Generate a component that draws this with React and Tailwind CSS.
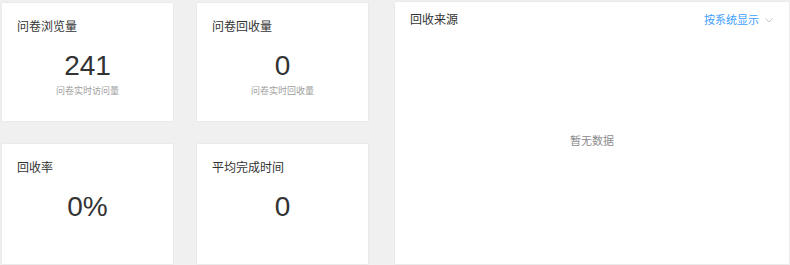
import React from "react";

const font = { fontFamily: '"Liberation Sans", "Noto Sans CJK SC", sans-serif' };

const StatCard = ({ title, value, sub }) => (
  <div className="bg-white shadow-[0_0_2px_rgba(0,0,0,0.08)] px-[15px] pt-[15px]">
    <div className="text-[12px] leading-[18px] text-[#333]">{title}</div>
    <div className="mt-[16px] text-center text-[28px] leading-[28px] text-[#333]">{value}</div>
    {sub && (
      <div className="mt-[5px] text-center text-[9px] leading-[12px] text-[#a0a0a0]">{sub}</div>
    )}
  </div>
);

export default function App() {
  return (
    <div className="w-[790px] h-[265px] bg-[#f0f0f0] flex overflow-hidden" style={font}>
      <div className="pl-[2px] pt-[3px] grid grid-cols-[171px_171px] grid-rows-[118px_120px] gap-x-[24px] gap-y-[23px]">
        <StatCard title="问卷浏览量" value="241" sub="问卷实时访问量" />
        <StatCard title="问卷回收量" value="0" sub="问卷实时回收量" />
        <StatCard title="回收率" value="0%" />
        <StatCard title="平均完成时间" value="0" />
      </div>
      <div className="ml-[27px] mt-[2px] w-[394px] h-[262px] bg-white shadow-[0_0_2px_rgba(0,0,0,0.08)] flex flex-col">
        <div className="flex items-center justify-between pl-[15px] pr-[16px] pt-[9px]">
          <span className="text-[12px] leading-[18px] text-[#333]">回收来源</span>
          <span className="flex items-center gap-[6px] text-[11px] leading-[18px] text-[#409eff] cursor-pointer">
            按系统显示
            <svg width="8" height="5" viewBox="0 0 8 5" fill="none">
              <path d="M0.5 0.5L4 4L7.5 0.5" stroke="#c0c4cc" strokeWidth="1" />
            </svg>
          </span>
        </div>
        <div className="mt-[104px] text-center text-[11px] leading-[16px] text-[#8c8c8c]">暂无数据</div>
      </div>
    </div>
  );
}
